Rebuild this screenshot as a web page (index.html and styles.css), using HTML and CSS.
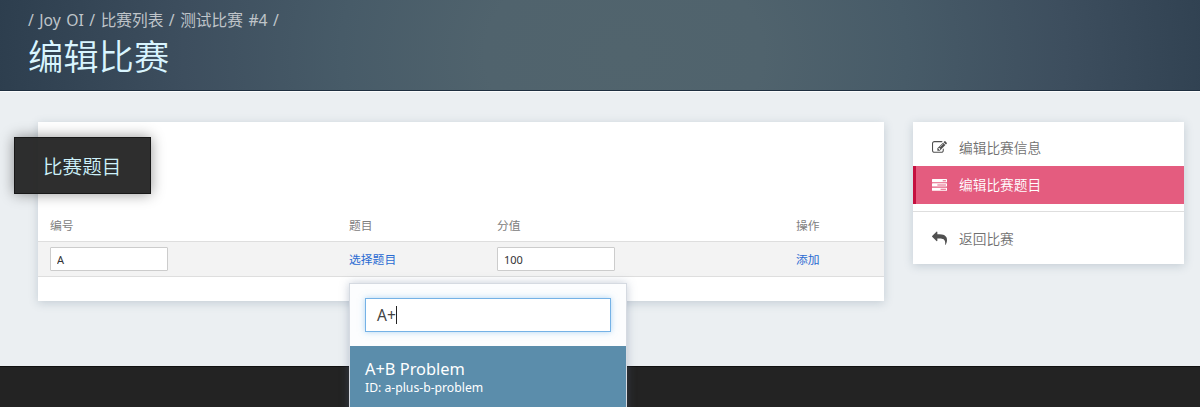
FILE: index.html
```html
<!DOCTYPE html>
<html lang="zh-CN">
<head>
<meta charset="utf-8">
<title>编辑比赛</title>
<link rel="stylesheet" href="styles.css">
</head>
<body>
<header class="banner">
  <nav class="crumbs">/ <a>Joy OI</a> / <a>比赛列表</a> / <a>测试比赛 #4</a> /</nav>
  <h1 class="title">编辑比赛</h1>
</header>
<main class="content">
  <section class="card">
    <h2 class="tag">比赛题目</h2>
    <div class="row head"><span>编号</span><span>题目</span><span>分值</span><span>操作</span></div>
    <div class="row entry">
      <span><input class="field" value="A"></span>
      <span class="picker"><a class="link">选择题目</a>
        <div class="popup">
          <div class="search"><div class="query">A+<i class="caret"></i></div></div>
          <div class="result"><div class="name">A+B Problem</div><div class="ident">ID: a-plus-b-problem</div></div>
        </div>
      </span>
      <span><input class="field" value="100"></span>
      <span><a class="link">添加</a></span>
    </div>
  </section>
  <aside class="side">
    <a class="item"><svg class="icon" viewBox="0 0 1792 1792"><path d="M888 1184l116-116-152-152-116 116v56h96v96h56zm440-720q-16-16-33 1l-350 350q-17 17-1 33t33-1l350-350q17-17 1-33zm80 594v190q0 119-84.5 203.5t-203.5 84.5h-832q-119 0-203.5-84.5t-84.5-203.5v-832q0-119 84.5-203.5t203.5-84.5h832q63 0 117 25 15 7 18 23 3 17-9 29l-49 49q-14 14-32 8-23-6-45-6h-832q-66 0-113 47t-47 113v832q0 66 47 113t113 47h832q66 0 113-47t47-113v-126q0-13 9-22l64-64q15-15 35-7t20 29zm-96-738l288 288-672 672h-288v-288zm444 132l-92 92-288-288 92-92q28-28 68-28t68 28l152 152q28 28 28 68t-28 68z"/></svg>编辑比赛信息</a>
    <a class="item active"><svg class="icon" viewBox="0 0 1792 1792"><path d="M1024 1408h640v-128h-640v128zm-384-512h1024v-128h-1024v128zm640-512h384v-128h-384v128zm512 832v256q0 26-19 45t-45 19h-1664q-26 0-45-19t-19-45v-256q0-26 19-45t45-19h1664q26 0 45 19t19 45zm0-512v256q0 26-19 45t-45 19h-1664q-26 0-45-19t-19-45v-256q0-26 19-45t45-19h1664q26 0 45 19t19 45zm0-512v256q0 26-19 45t-45 19h-1664q-26 0-45-19t-19-45v-256q0-26 19-45t45-19h1664q26 0 45 19t19 45z"/></svg>编辑比赛题目</a>
    <div class="rule"></div>
    <a class="item"><svg class="icon" viewBox="0 0 1792 1792"><path transform="matrix(-1 0 0 1 1792 0)" d="M1792 640q0 26-19 45l-512 512q-19 19-45 19t-45-19-19-45v-256h-224q-98 0-175.500 6t-154 21.500-133 42.500-105.500 69.500-80 101-48.500 138.500-17.500 181q0 55 5 123 0 6 2.500 23.500t2.500 26.500q0 15-8.500 25t-23.500 10q-16 0-28-17-7-9-13-22t-13.500-30-10.500-24q-127-285-127-451 0-199 53-333 162-403 875-403h224v-256q0-26 19-45t45-19 45 19l512 512q19 19 19 45z"/></svg>返回比赛</a>
  </aside>
</main>
<footer class="footer"></footer>
</body>
</html>
```
FILE: styles.css
```css
* { box-sizing: border-box; }
body {
  margin: 0;
  height: 407px;
  overflow: hidden;
  display: flex;
  flex-direction: column;
  background: #ebeff2;
  color: #808080;
  font: 400 11.800px/18px "Noto Sans", "Noto Sans CJK SC", sans-serif;
}
.banner {
  height: 91px;
  padding: 9px 28px 0;
  border-bottom: 1px solid #1f2f40;
  background: radial-gradient(ellipse 630px 460px at 52% 60%, #51646d 0%, #50636d 22%, #475b68 45%, #3d4e5e 70%, #2d3e4e 100%);
}
.crumbs { font-size: 15.700px; line-height: 22px; color: #bfc4c9; word-spacing: 1.400px; }
.title { margin: 4px 0 0; font-size: 35.300px; line-height: 42px; font-weight: 350; color: #d9f5ff; }
.content { height: 275px; padding: 31px 16px 0 38px; display: flex; align-items: flex-start; gap: 29px; border-top: 1px solid #fbfcfd; }
.card, .side { background: #fff; box-shadow: 0 2px 9px rgba(60, 85, 110, .22); }
.card { width: 846px; height: 179px; margin-top: -1px; padding-top: 15px; }
.tag {
  width: 137px;
  height: 57px;
  margin: 0 0 0 -24px;
  padding-left: 28px;
  border: 1px solid #181818;
  background: rgba(35, 35, 35, .95);
  box-shadow: 0 0 13px rgba(0, 0, 0, .42);
  color: #cdf1fa;
  font-size: 19.600px;
  line-height: 57px;
  font-weight: 350;
}
.row { display: grid; grid-template-columns: 299px 148px 299px 1fr; padding-left: 12px; align-items: center; }
.head { height: 32px; margin-top: 15px; }
.entry { height: 36px; background: #f3f3f3; border: solid #dedede; border-width: 1px 0; }
.field {
  display: block;
  width: 118px;
  height: 24px;
  padding: 0 6px;
  border: 1px solid #ccc;
  border-radius: 1px;
  background: #fff;
  color: #333;
  font: 400 11px/20px "Noto Sans", sans-serif;
}
.link { color: #2a6bd2; }
.picker { position: relative; }
.popup {
  position: absolute;
  left: 0;
  top: 33px;
  width: 278px;
  height: 140px;
  border: 1px solid #d5dae1;
  background: #fcfdfe;
  box-shadow: 0 0 9px rgba(90, 110, 140, .35);
  color: #fff;
}
.search { height: 62px; padding: 14px 15px 0 15px; }
.query {
  display: flex;
  align-items: center;
  height: 34px;
  padding-left: 11px;
  border: 1px solid #75b2e6;
  background: #fff;
  box-shadow: 0 0 6px rgba(102, 175, 233, .5);
  color: #444;
  font-size: 15.500px;
}
.caret { width: 1px; height: 18px; background: #222; }
.result { height: 80px; padding: 13px 15px; background: #5b8dab; }
.name { font-size: 16.400px; line-height: 20px; }
.ident { font-size: 12.200px; line-height: 18px; }
.side { width: 271px; height: 142px; margin-top: -1px; padding-top: 7px; }
.item { display: flex; align-items: center; gap: 12px; height: 37px; padding-left: 19px; font-size: 13.700px; font-weight: 350; color: #707070; }
.icon { width: 15px; height: 15px; fill: #505050; }
.active { height: 38px; padding-left: 16px; border-left: 3px solid #c5103f; background: #e45c7f; color: #fff; }
.active .icon { fill: #fff; }
.rule { height: 1px; margin: 7px 0 8px; background: #dedede; }
.footer { height: 41px; background: #232323; border-top: 1px solid #111; }
```
